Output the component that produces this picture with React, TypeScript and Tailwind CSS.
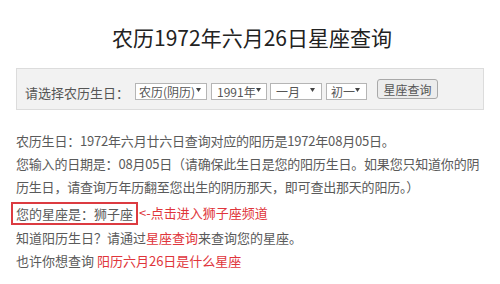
import React from "react";

function Arrow() {
  return (
    <svg width="5" height="4" viewBox="0 0 5 4" className="shrink-0 mb-[3px]">
      <path d="M0 0 L5 0 L2.5 4 Z" fill="#444" />
    </svg>
  );
}

function Sel({ label, w, ml, textPl, arrowRight }: { label: string; w: string; ml: string; textPl: string; arrowRight: string }) {
  return (
    <div className={`${w} ${ml} mt-[4px] h-[17px] bg-white border border-[#b5b5b5] flex items-center justify-between ${textPl} ${arrowRight} text-[12px] leading-[15px] text-[#555]`}>
      <span className="whitespace-nowrap">{label}</span>
      <Arrow />
    </div>
  );
}

export default function App() {
  return (
    <div className="w-[500px] h-[284px] bg-white overflow-hidden font-['Noto_Sans_CJK_SC','Microsoft_YaHei',sans-serif]">
      <h1 className="pt-[23px] text-center text-[21px] leading-[28px] text-[#222] pl-[4px]">
        农历1972年六月26日星座查询
      </h1>
      <div className="mx-[16px] mt-[17px] h-[42px] bg-[#f2f2f2] border border-[#dcdcdc] flex items-center pl-[8px]">
        <div className="w-[110px] mt-[7px] text-[13px] leading-[16px] text-[#555]">请选择农历生日：</div>
        <Sel label="农历(阴历)" w="w-[72px]" ml="ml-0" textPl="pl-[3px]" arrowRight="pr-[5px]" />
        <Sel label="1991年" w="w-[56px]" ml="ml-[4px]" textPl="pl-[5px]" arrowRight="pr-[5px]" />
        <Sel label="一月" w="w-[52px]" ml="ml-[3px]" textPl="pl-[5px]" arrowRight="pr-[6px]" />
        <Sel label="初一" w="w-[41px]" ml="ml-[4px]" textPl="pl-[4px]" arrowRight="pr-[6px]" />
        <div className="ml-[10px] w-[61px] h-[20px] bg-[#ececec] border border-[#a9a9a9] rounded-[3px] flex items-center justify-center text-[12px] leading-[15px] text-[#555]">
          星座查询
        </div>
      </div>
      <div className="mt-[19px] px-[16px] text-[13px] leading-[23px] text-[#5a5a5a] whitespace-nowrap">
        <div className="tracking-[-0.2px]">农历生日：1972年六月廿六日查询对应的阳历是1972年08月05日。</div>
        <div className="tracking-[-0.2px]">
          您输入的日期是：08月05日（请确保此生日是您的阳历生日。如果您只知道你的阴
          <br />
          历生日，请查询万年历翻至您出生的阴历那天，即可查出那天的阳历。）
        </div>
        <div className="h-[28px] flex items-center">
          <span className="-ml-[5px] mt-[3px] h-[23px] flex items-center px-[3px] border-2 border-[#dc3b41]">
            您的星座是：狮子座
          </span>
          <span className="ml-[1px] mt-[1px] text-[#e0353b]">&lt;-点击进入狮子座频道</span>
        </div>
        <div>
          知道阳历生日？请通过<span className="text-[#e0353b]">星座查询</span>来查询您的星座。
        </div>
        <div>
          也许你想查询 <span className="text-[#e0353b]">阳历六月26日是什么星座</span>
        </div>
      </div>
    </div>
  );
}
